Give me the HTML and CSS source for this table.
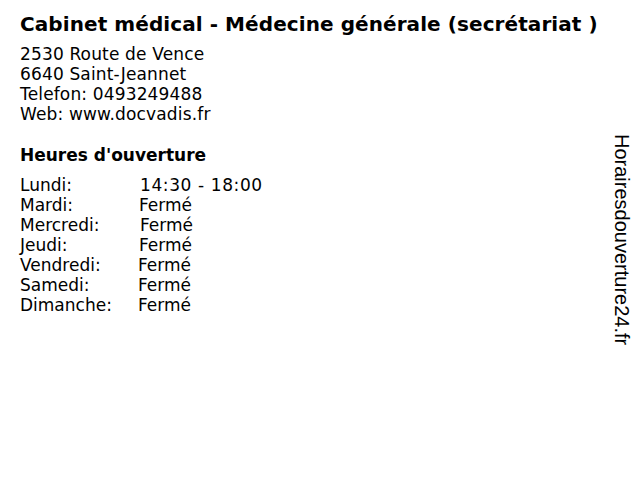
FILE: index.html
```html
<!DOCTYPE html>
<html lang="fr">
<head>
<meta charset="utf-8">
<title>Cabinet médical</title>
<link rel="stylesheet" href="styles.css">
</head>
<body>
<div class="page">
  <main class="content">
    <h1 class="title">Cabinet médical - Médecine générale (secrétariat )</h1>
    <div class="address">
      <div>2530 Route de Vence</div>
      <div>6640 Saint-Jeannet</div>
      <div>Telefon: 0493249488</div>
      <div>Web: www.docvadis.fr</div>
    </div>
    <h2 class="subtitle">Heures d'ouverture</h2>
    <div class="hours">
      <span class="day">Lundi:</span><span class="time t1 range">14:30 - 18:00</span>
      <span class="day">Mardi:</span><span class="time">Fermé</span>
      <span class="day">Mercredi:</span><span class="time t1">Fermé</span>
      <span class="day">Jeudi:</span><span class="time">Fermé</span>
      <span class="day">Vendredi:</span><span class="time tm">Fermé</span>
      <span class="day">Samedi:</span><span class="time tm">Fermé</span>
      <span class="day">Dimanche:</span><span class="time tm">Fermé</span>
    </div>
  </main>
  <aside class="brand">Horairesdouverture24.fr</aside>
</div>
</body>
</html>
```
FILE: styles.css
```css
html, body {
  margin: 0;
  padding: 0;
  background: #fff;
}
.page {
  width: 640px;
  height: 480px;
  display: flex;
  justify-content: space-between;
  font-family: "DejaVu Sans", Verdana, sans-serif;
  color: #000;
}
.content {
  padding: 11px 0 0 20px;
}
.title {
  margin: 0;
  font-size: 20px;
  font-weight: bold;
  line-height: 26px;
  letter-spacing: 0.08px;
}
.address {
  margin-top: 7px;
  font-size: 17px;
  line-height: 20px;
  letter-spacing: 0.15px;
}
.subtitle {
  margin: 21px 0 0;
  font-size: 17px;
  font-weight: bold;
  line-height: 20px;
}
.hours {
  margin-top: 10px;
  display: grid;
  grid-template-columns: 119px auto;
  font-size: 17px;
  line-height: 20px;
}
.time.t1 { margin-left: 1px; }
.time.tm { margin-left: -1px; }
.time.range { letter-spacing: 0.6px; }
.brand {
  writing-mode: vertical-rl;
  font-family: "Liberation Sans", Arial, sans-serif;
  font-size: 20px;
  margin: 134px 6px 0 0;
  line-height: 24px;
  height: max-content;
}
```
